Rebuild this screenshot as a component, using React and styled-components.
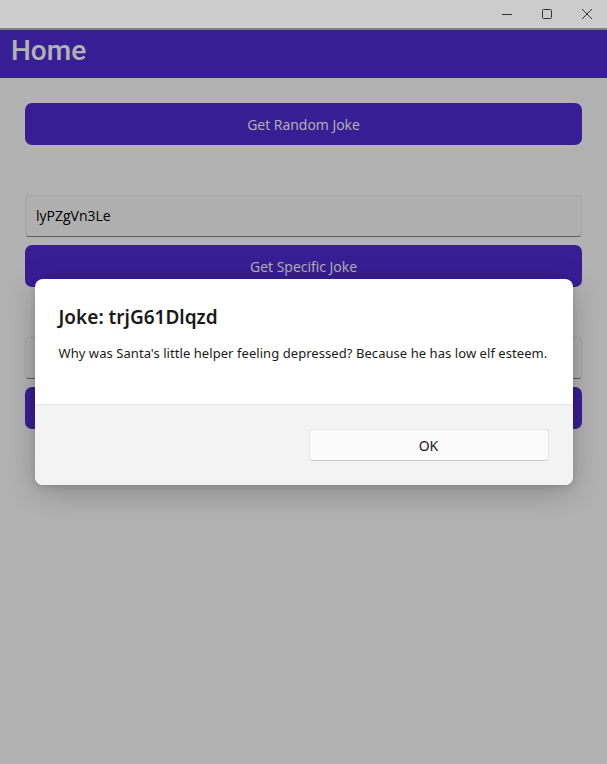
import React from 'react';
import styled, { createGlobalStyle } from 'styled-components';

const GlobalStyle = createGlobalStyle`
  html, body {
    margin: 0;
    padding: 0;
    background: #ffffff;
  }
  * {
    box-sizing: border-box;
  }
`;

const Window = styled.div`
  position: relative;
  height: 764px;
  overflow: hidden;
  display: flex;
  flex-direction: column;
  background: #ffffff;
`;

const TitleBar = styled.div`
  height: 30px;
  flex-shrink: 0;
  background: #cccccc;
  border-bottom: 2px solid #7f7f7f;
  display: flex;
  justify-content: flex-end;
`;

const CaptionButton = styled.div`
  width: 40px;
  height: 28px;
  display: flex;
  align-items: center;
  justify-content: center;
  color: #333333;
`;

const Header = styled.div`
  height: 48px;
  flex-shrink: 0;
  background: #512bd4;
  color: #ffffff;
  font-family: Roboto, 'Open Sans', sans-serif;
  font-weight: 500;
  font-size: 28px;
  line-height: 42px;
  padding-left: 11px;
`;

const Content = styled.div`
  flex: 1;
  padding: 25px 25px;
  display: flex;
  flex-direction: column;
`;

const Group = styled.div`
  display: flex;
  flex-direction: column;
  gap: 8px;
  margin-bottom: 50px;
`;

const PrimaryButton = styled.div`
  height: 42px;
  border-radius: 7px;
  background: #512bd4;
  color: #ffffff;
  font-family: 'Open Sans', 'Noto Sans', sans-serif;
  font-size: 14px;
  display: flex;
  align-items: center;
  justify-content: center;
`;

const Entry = styled.div`
  height: 42px;
  border-radius: 4px;
  background: #fbfbfb;
  border: 1px solid #ededed;
  border-bottom: 1px solid #868686;
  color: #000000;
  font-family: 'Open Sans', 'Noto Sans', sans-serif;
  font-size: 14px;
  display: flex;
  align-items: center;
  padding: 0 0 2px 10px;
`;

const Overlay = styled.div`
  position: absolute;
  top: 30px;
  left: 0;
  right: 0;
  bottom: 0;
  background: rgba(0, 0, 0, 0.3);
  display: flex;
  justify-content: center;
  align-items: flex-start;
  padding-top: 249px;
`;

const Dialog = styled.div`
  width: 538px;
  background: #ffffff;
  border-radius: 8px;
  overflow: hidden;
  box-shadow: 0 8px 32px rgba(0, 0, 0, 0.22), 0 2px 6px rgba(0, 0, 0, 0.12);
  font-family: 'Segoe UI', 'Noto Sans', sans-serif;
  color: #1a1a1a;
`;

const DialogBody = styled.div`
  height: 125px;
  padding: 24px 24px 0;
`;

const DialogTitle = styled.div`
  font-size: 19px;
  font-weight: 600;
  line-height: 28px;
  margin-bottom: 12px;
`;

const DialogText = styled.div`
  font-size: 13px;
  letter-spacing: 0.06px;
  line-height: 20px;
  white-space: nowrap;
`;

const DialogFooter = styled.div`
  height: 81px;
  background: #f3f3f3;
  border-top: 1px solid #e5e5e5;
  padding: 24px;
  display: flex;
  justify-content: flex-end;
`;

const DialogButton = styled.div`
  width: 240px;
  height: 32px;
  border-radius: 4px;
  background: #fbfbfb;
  border: 1px solid #e5e5e5;
  border-bottom-color: #cccccc;
  font-size: 14px;
  display: flex;
  align-items: center;
  justify-content: center;
`;

const Minimize = () => (
  <svg width="12" height="12" viewBox="0 0 12 12">
    <line x1="1" y1="6.5" x2="11" y2="6.5" stroke="currentColor" strokeWidth="1" />
  </svg>
);

const Maximize = () => (
  <svg width="12" height="12" viewBox="0 0 12 12">
    <rect x="1.5" y="1.5" width="9" height="9" rx="1" fill="none" stroke="currentColor" strokeWidth="1" />
  </svg>
);

const Close = () => (
  <svg width="12" height="12" viewBox="0 0 12 12">
    <path d="M1 1 L11 11 M11 1 L1 11" stroke="currentColor" strokeWidth="1" fill="none" />
  </svg>
);

const App = () => {
  return (
    <Window>
      <GlobalStyle />
      <TitleBar>
        <CaptionButton><Minimize /></CaptionButton>
        <CaptionButton><Maximize /></CaptionButton>
        <CaptionButton><Close /></CaptionButton>
      </TitleBar>
      <Header>Home</Header>
      <Content>
        <Group>
          <PrimaryButton>Get Random Joke</PrimaryButton>
        </Group>
        <Group>
          <Entry>lyPZgVn3Le</Entry>
          <PrimaryButton>Get Specific Joke</PrimaryButton>
        </Group>
        <Group>
          <Entry />
          <PrimaryButton>Get Joke</PrimaryButton>
        </Group>
      </Content>
      <Overlay>
        <Dialog>
          <DialogBody>
            <DialogTitle>Joke: trjG61Dlqzd</DialogTitle>
            <DialogText>
              Why was Santa's little helper feeling depressed? Because he has low elf esteem.
            </DialogText>
          </DialogBody>
          <DialogFooter>
            <DialogButton>OK</DialogButton>
          </DialogFooter>
        </Dialog>
      </Overlay>
    </Window>
  );
};

export default App;
